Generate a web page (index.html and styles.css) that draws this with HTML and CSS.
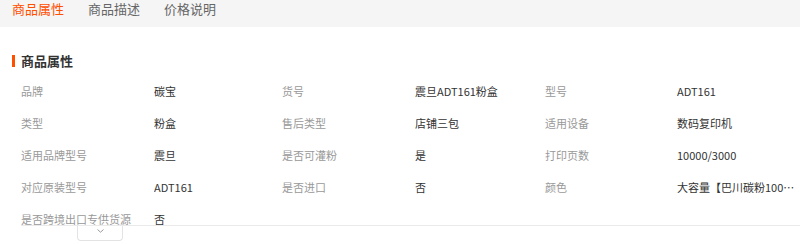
FILE: index.html
```html
<!DOCTYPE html>
<html lang="zh-CN">
<head>
<meta charset="utf-8">
<title>商品属性</title>
<link rel="stylesheet" href="styles.css">
</head>
<body>
<div class="tabs">
  <span class="tab active">商品属性</span>
  <span class="tab">商品描述</span>
  <span class="tab">价格说明</span>
</div>
<div class="section">
  <h3 class="title">商品属性</h3>
  <div class="props">
    <div class="grid">
      <span class="k">品牌</span><span class="v">碳宝</span>
      <span class="k">货号</span><span class="v">震旦ADT161粉盒</span>
      <span class="k">型号</span><span class="v">ADT161</span>

      <span class="k">类型</span><span class="v">粉盒</span>
      <span class="k">售后类型</span><span class="v">店铺三包</span>
      <span class="k">适用设备</span><span class="v">数码复印机</span>

      <span class="k">适用品牌型号</span><span class="v">震旦</span>
      <span class="k">是否可灌粉</span><span class="v">是</span>
      <span class="k">打印页数</span><span class="v">10000/3000</span>

      <span class="k">对应原装型号</span><span class="v">ADT161</span>
      <span class="k">是否进口</span><span class="v">否</span>
      <span class="k">颜色</span><span class="v last">大容量【巴川碳粉1000克】</span>

      <span class="k">是否跨境出口专供货源</span><span class="v">否</span>
    </div>
  </div>
  <button class="toggle" type="button" aria-label="展开">
    <svg width="7" height="4" viewBox="0 0 7 4"><path d="M0.5 0.5 L3.5 3.2 L6.5 0.5" fill="none" stroke="#999" stroke-width="1"/></svg>
  </button>
</div>
</body>
</html>
```

FILE: styles.css
```css
html, body {
  margin: 0;
  padding: 0;
  background: #fff;
}
body {
  font-family: "Noto Sans CJK SC", "Noto Sans", sans-serif;
  color: #333;
  width: 800px;
  overflow: hidden;
}
.tabs {
  height: 27px;
  background: #f5f5f5;
  display: flex;
  gap: 24px;
  padding-left: 12px;
}
.tab {
  font-size: 13px;
  line-height: 17px;
  color: #666;
}
.tab.active {
  color: #ff5000;
}
.section {
  padding-left: 21px;
}
.title {
  position: relative;
  margin: 24px 0 4px;
  font-size: 13px;
  line-height: 20px;
  font-weight: bold;
  color: #333;
}
.title::before {
  content: "";
  position: absolute;
  left: -9px;
  top: 4px;
  width: 3px;
  height: 12px;
  background: #ff5000;
}
.props {
  height: 150px;
  overflow: hidden;
  border-bottom: 1px solid #eaeaea;
}
.grid {
  display: grid;
  grid-template-columns: 133px 128px 133px 130px 132px 123px;
  grid-auto-rows: 32px;
  font-size: 11px;
  line-height: 32px;
}
.k {
  color: #999;
  white-space: nowrap;
}
.v {
  color: #333;
  white-space: nowrap;
  overflow: hidden;
  text-overflow: ellipsis;
}
.toggle {
  display: flex;
  align-items: flex-start;
  justify-content: center;
  margin-left: 56px;
  width: 46px;
  height: 15px;
  padding: 3px 0 0;
  border: 1px solid #e3e3e3;
  border-top: none;
  border-radius: 0 0 4px 4px;
  background: #fff;
}
.toggle svg {
  display: block;
}
```
